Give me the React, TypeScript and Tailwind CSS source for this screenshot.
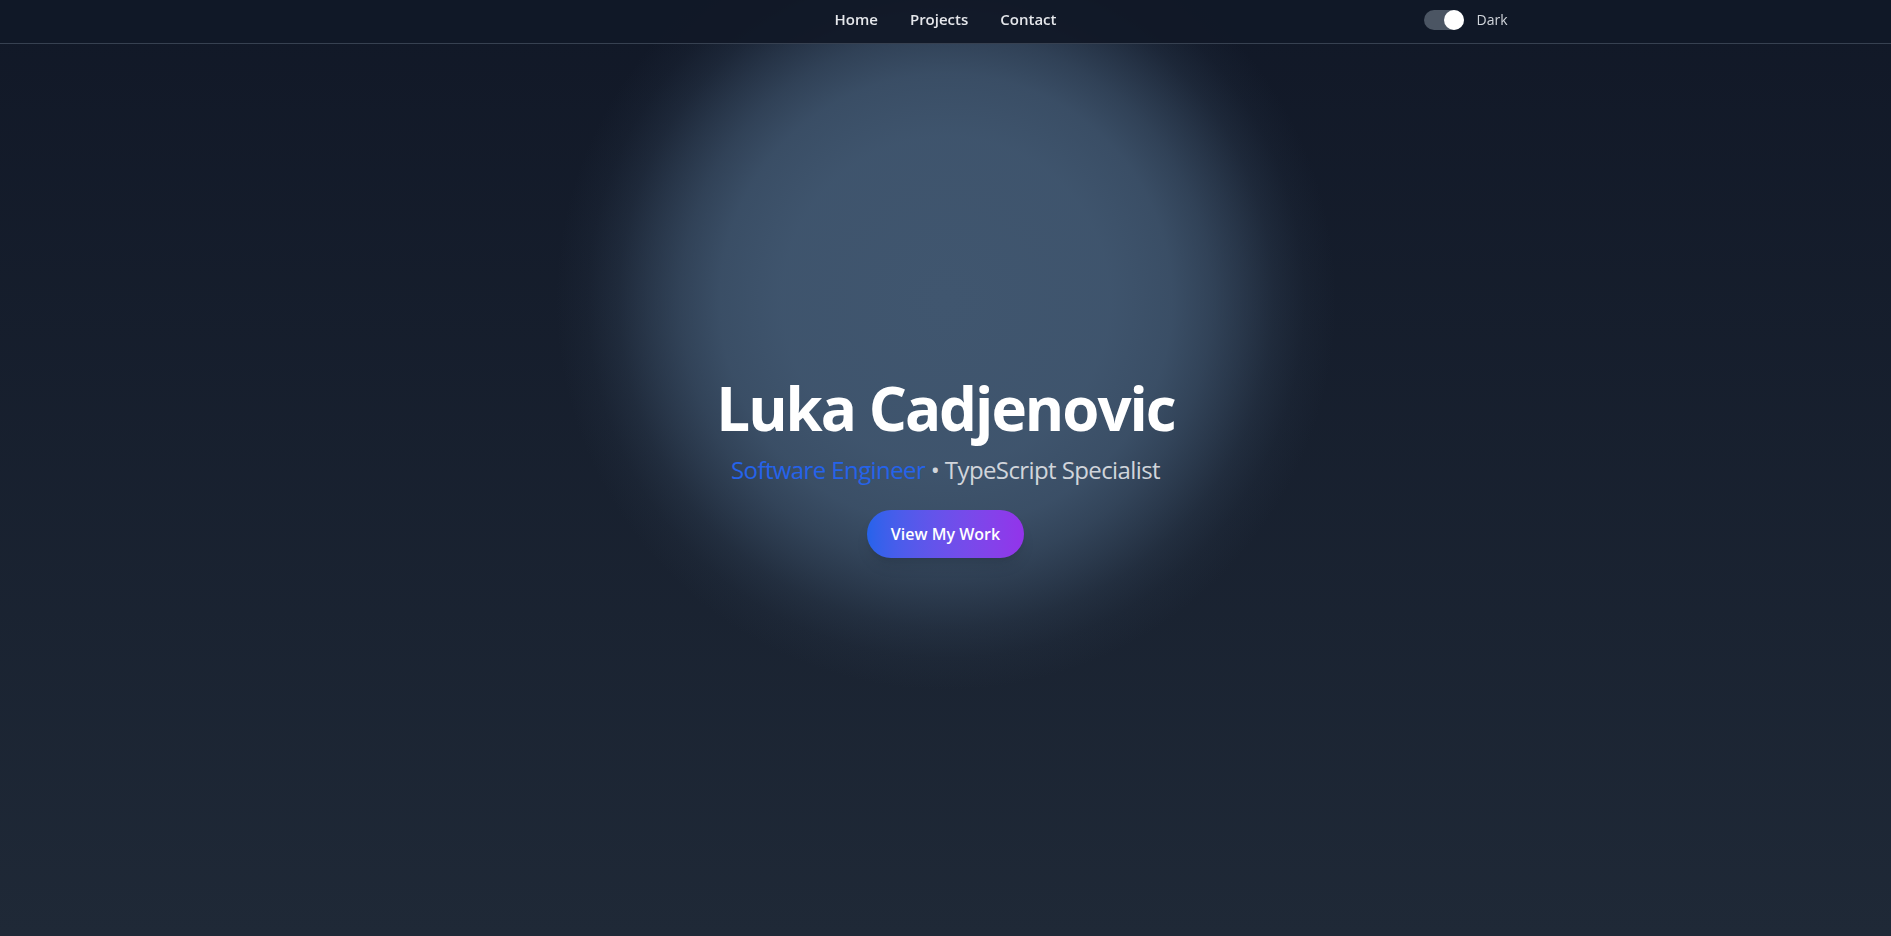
import { useState } from "react";

const links = ["Home", "Projects", "Contact"];

function ThemeToggle() {
  const [dark, setDark] = useState(true);

  return (
    <button
      onClick={() => setDark(!dark)}
      className="flex items-center gap-3 text-sm text-[#d1d5db]"
    >
      <span className="relative h-5 w-10 rounded-full bg-[#4b5563]">
        <span
          className={`absolute top-0 h-5 w-5 rounded-full bg-white ${dark ? "right-0" : "left-0"}`}
        />
      </span>
      <span>{dark ? "Dark" : "Light"}</span>
    </button>
  );
}

export default function App() {
  return (
    <div
      className="relative min-h-screen overflow-hidden bg-linear-to-b from-[#111827] to-[#1f2937] text-white"
      style={{ fontFamily: '"Open Sans", "Noto Sans", sans-serif' }}
    >
      {/* glow */}
      <div className="pointer-events-none absolute left-1/2 top-[300px] h-[780px] w-[780px] -translate-x-1/2 -translate-y-1/2 rounded-full bg-[radial-gradient(circle_closest-side,rgba(64,86,111,1)_0%,rgba(64,86,111,0.97)_42%,rgba(64,86,111,0.86)_58%,rgba(64,86,111,0.66)_68%,rgba(64,86,111,0.45)_76%,rgba(64,86,111,0.23)_84%,rgba(64,86,111,0.08)_92%,rgba(64,86,111,0)_100%)]" />

      <nav className="fixed inset-x-0 top-0 z-10 h-11 border-b border-[#374151] bg-[#111827]/95">
        <div className="mx-auto flex h-full w-[1124px] items-center pb-1">
          <div className="flex-1" />
          <div className="flex items-center gap-8">
            {links.map((link) => (
              <a key={link} href="#" className="text-[15px] font-semibold text-[#e5e7eb]">
                {link}
              </a>
            ))}
          </div>
          <div className="flex flex-1 justify-end">
            <ThemeToggle />
          </div>
        </div>
      </nav>

      <section className="relative flex min-h-screen flex-col items-center justify-center text-center">
        <h1 className="text-6xl font-bold tracking-[-2px] text-white">Luka Cadjenovic</h1>
        <p className="mt-4 text-2xl tracking-[-0.6px] text-[#d1d5db]">
          <span className="text-[#2563eb]">Software Engineer</span> • TypeScript Specialist
        </p>
        <button className="mt-6 rounded-full bg-linear-to-r from-[#2563eb] to-[#9333ea] px-6 py-3 font-semibold text-white shadow-lg">
          View My Work
        </button>
      </section>
    </div>
  );
}
